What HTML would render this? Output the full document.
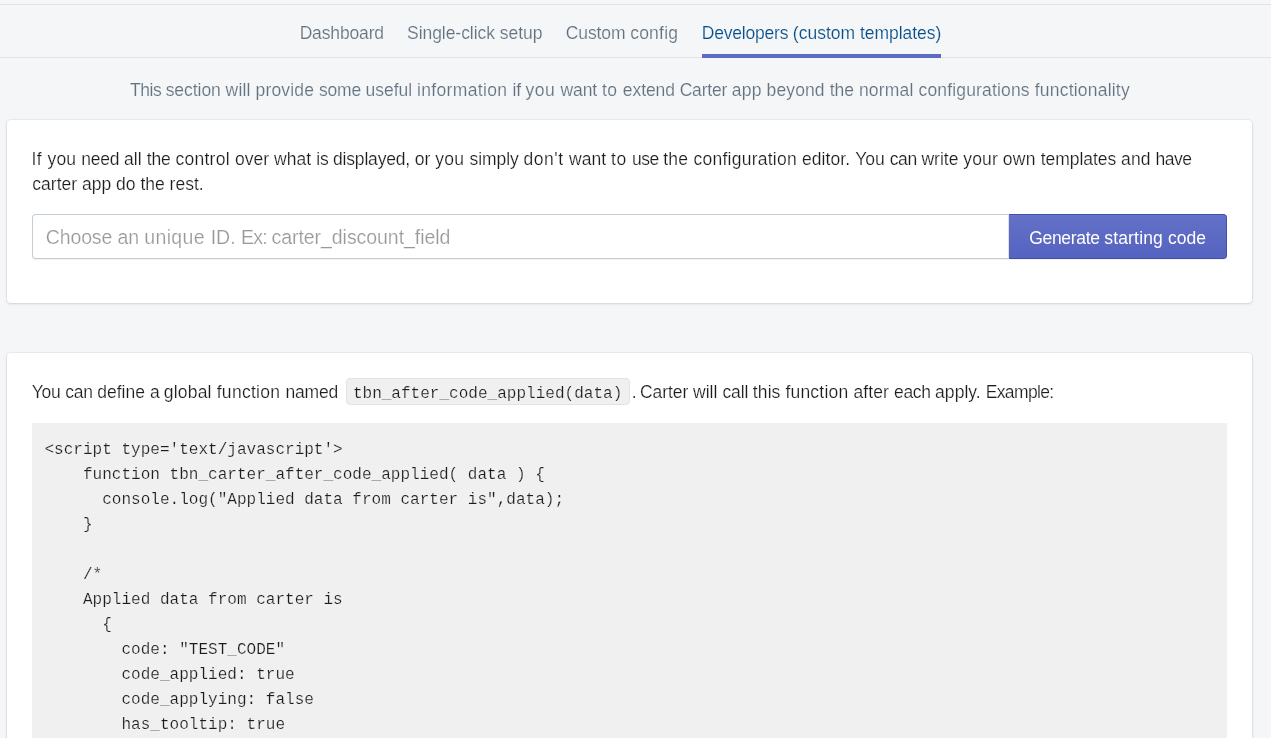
<!DOCTYPE html>
<html lang="en">
<head>
<meta charset="utf-8">
<title>Carter - Developers (custom templates)</title>
<style>
*{box-sizing:border-box;margin:0;padding:0}
html,body{width:1271px;height:738px;overflow:hidden;background:#f4f6f8}
body{position:relative;font-family:"Liberation Sans",Arial,sans-serif;font-size:17.5px;line-height:25px;color:#1c1c1c}
#wrap{position:absolute;left:0;top:0;width:1271px;height:738px;overflow:hidden;will-change:transform}
ul{list-style:none}
a{text-decoration:none}
.abs{position:absolute;white-space:nowrap}
.t{line-height:25px;height:25px;font-weight:400;font-style:normal}
.topline{left:0;top:4px;width:1271px;height:1px;background:#dfe3e8}
.tabline{left:0;top:57px;width:1271px;height:1px;background:#dfe3e8}
.tabul{left:702px;top:54px;width:239px;height:4px;background:#5c6ac4}
.card{left:7px;width:1245px;background:#fff;border-radius:4px;box-shadow:0 0 0 1px rgba(63,63,68,.05),0 1px 3px 0 rgba(63,63,68,.15)}
.c1{top:120px;height:183px}
.c2{top:353px;height:400px}
.input{width:977px;height:45px;background:#fff;border:1px solid #c4cdd5;border-right-color:#dde1e6;border-radius:4px 0 0 4px;box-shadow:0 1px 0 0 rgba(22,29,37,.05)}
.btn{width:218px;height:45px;border-radius:0 3.75px 3.75px 0;background:linear-gradient(to bottom,#6371c7,#5563c1);border:1px solid #3f4eae;border-left-width:0;box-shadow:inset 0 1px 0 0 #6774c8,0 1px 0 0 rgba(22,29,37,.05);font:inherit;color:#fff;text-align:left;cursor:pointer;overflow:visible}
.icode{width:284px;height:27px;background:#f0f0f0;border:1px solid #e2e2e2;border-radius:4px}
.mono{font-family:"Liberation Mono","DejaVu Sans Mono",monospace}
pre#code{width:1195px;height:330px;background:#f0f0f0;padding:15px 12.5px;font-family:"Liberation Mono","DejaVu Sans Mono",monospace;font-size:16.04px;line-height:25px;color:#1c1c1c;white-space:pre;overflow:hidden;-webkit-text-stroke:0.2px #f0f0f0}
</style>
</head>
<body>
<div id="wrap">
<div class="abs topline"></div>
<div class="abs tabline"></div>
<nav class="tabs">
<ul>
<li><a id="t1" class="abs t" style="left:299.63px;top:21px;font-size:17.5px;color:#637381;letter-spacing:-0.142px;-webkit-text-stroke:0.15px #f4f6f8">Dashboard</a></li>
<li><a id="t2" class="abs t" style="left:407.04px;top:21px;font-size:17.5px;color:#637381;letter-spacing:-0.023px;-webkit-text-stroke:0.15px #f4f6f8"><span style="letter-spacing:-0.054px">Single-click </span><span style="letter-spacing:0.002px">setup</span></a></li>
<li><a id="t3" class="abs t" style="left:565.75px;top:21px;font-size:17.5px;color:#637381;letter-spacing:0.047px;-webkit-text-stroke:0.15px #f4f6f8"><span style="letter-spacing:-0.103px">Custom </span><span style="letter-spacing:0.227px">config</span></a></li>
<li><a id="t4" class="abs t" aria-current="page" style="left:701.74px;top:21px;font-size:17.5px;color:#084e8a;letter-spacing:-0.069px;-webkit-text-stroke:0.15px #f4f6f8"><span style="letter-spacing:-0.205px">Developers </span><span style="letter-spacing:-0.007px">(custom </span><span style="letter-spacing:-0.036px">templates)</span></a></li>
</ul>
<div class="abs tabul"></div>
</nav>
<p id="sub" class="abs t" style="left:130.1px;top:78px;font-size:17.5px;color:#637381;letter-spacing:0.079px;-webkit-text-stroke:0.15px #f4f6f8"><span style="letter-spacing:-0.481px">This </span><span style="letter-spacing:-0.046px">section </span><span style="letter-spacing:0.159px">will </span><span style="letter-spacing:0.154px">provide </span><span style="letter-spacing:-0.221px">some </span><span style="letter-spacing:-0.035px">useful </span><span style="letter-spacing:0.346px">information </span><span style="letter-spacing:-0.221px">if </span><span style="letter-spacing:0.454px">you </span><span style="letter-spacing:-0.041px">want </span><span style="letter-spacing:0.446px">to </span><span style="letter-spacing:-0.078px">extend </span><span style="letter-spacing:-0.192px">Carter </span><span style="letter-spacing:0.179px">app </span><span style="letter-spacing:0.108px">beyond </span><span style="letter-spacing:0.029px">the </span><span style="letter-spacing:0.165px">normal </span><span style="letter-spacing:0.166px">configurations </span><span style="letter-spacing:0.204px">functionality</span></p>
<section class="abs card c1">
<p id="p1" class="abs t" style="left:24.58px;top:27px;font-size:17.5px;color:#1c1c1c;letter-spacing:0.063px;-webkit-text-stroke:0.2px #ffffff"><span style="letter-spacing:0.43px">If </span><span style="letter-spacing:0.163px">you </span><span style="letter-spacing:-0.197px">need </span>all <span style="letter-spacing:-0.087px">the </span><span style="letter-spacing:0.251px">control </span><span style="letter-spacing:0.043px">over </span><span style="letter-spacing:0.083px">what </span><span style="letter-spacing:-0.237px">is </span><span style="letter-spacing:-0.192px">displayed, </span>or <span style="letter-spacing:0.288px">you </span><span style="letter-spacing:-0.066px">simply </span><span style="letter-spacing:0.53px">don't </span>want <span style="letter-spacing:0.496px">to </span><span style="letter-spacing:-0.487px">use </span><span style="letter-spacing:0.288px">the </span><span style="letter-spacing:0.242px">configuration </span><span style="letter-spacing:0.076px">editor. </span><span style="letter-spacing:0.038px">You </span><span style="letter-spacing:-0.337px">can </span><span style="letter-spacing:-0.004px">write </span><span style="letter-spacing:0.143px">your </span><span style="letter-spacing:0.238px">own </span><span style="letter-spacing:-0.047px">templates </span><span style="letter-spacing:0.113px">and </span><span style="letter-spacing:-0.537px">have</span></p>
<p id="p2" class="abs t" style="left:25.37px;top:52px;font-size:17.5px;color:#1c1c1c;letter-spacing:0.004px;-webkit-text-stroke:0.2px #ffffff">carter app do the rest.</p>
<div class="abs input" style="left:25px;top:94px">
<span id="ph" class="abs t" style="left:12.86px;top:10px;font-size:19.5px;color:#999999;letter-spacing:-0.069px;-webkit-text-stroke:0.2px #ffffff"><span style="letter-spacing:-0.155px">Choose </span>an <span style="letter-spacing:0.345px">unique </span><span style="letter-spacing:-0.019px">ID. </span><span style="letter-spacing:-0.769px">Ex: </span><span style="letter-spacing:-0.054px">carter_discount_field</span></span>
</div>
<button type="button" class="abs btn" style="left:1002px;top:94px">
<span id="bt" class="abs t" style="left:20.2px;top:11px;font-size:17.5px;color:#ffffff;letter-spacing:-0.041px"><span style="letter-spacing:-0.308px">Generate </span><span style="letter-spacing:0.17px">starting </span><span style="letter-spacing:0.026px">code</span></span>
</button>
</section>
<section class="abs card c2">
<span id="q1" class="abs t" style="left:24.73px;top:27px;font-size:17.5px;color:#1c1c1c;letter-spacing:0.003px;-webkit-text-stroke:0.2px #ffffff"><span style="letter-spacing:-0.222px">You </span><span style="letter-spacing:-0.272px">can </span><span style="letter-spacing:0.017px">define </span><span style="letter-spacing:-0.347px">a </span><span style="letter-spacing:0.189px">global </span><span style="letter-spacing:0.281px">function </span><span style="letter-spacing:-0.147px">named</span></span>
<span class="abs icode" style="left:339px;top:25px"></span>
<code id="ic" class="abs t mono" style="left:345.9px;top:29px;font-size:16.04px;color:#1c1c1c;-webkit-text-stroke:0.2px #f0f0f0">tbn_after_code_applied(data)</code>
<span id="q2" class="abs t" style="left:624.84px;top:27px;font-size:17.5px;color:#1c1c1c;letter-spacing:-0.084px;-webkit-text-stroke:0.2px #ffffff"><span style="letter-spacing:-0.784px">. </span><span style="letter-spacing:-0.07px">Carter </span><span style="letter-spacing:0.056px">will </span><span style="letter-spacing:-0.144px">call </span><span style="letter-spacing:0.096px">this </span><span style="letter-spacing:0.205px">function </span><span style="letter-spacing:0.116px">after </span><span style="letter-spacing:-0.344px">each </span><span style="letter-spacing:0.045px">apply. </span><span style="letter-spacing:-0.627px">Example:</span></span>
<pre class="abs" id="code" style="left:25px;top:70px">&lt;script type='text/javascript'&gt;
    function tbn_carter_after_code_applied( data ) {
      console.log("Applied data from carter is",data);
    }

    /*
    Applied data from carter is
      {
        code: "TEST_CODE"
        code_applied: true
        code_applying: false
        has_tooltip: true
        tooltip_text: "Sample tooltip"
        discount_amount: 10
        discount_type: "percentage"
      }
    */
&lt;/script&gt;</pre>
</section>
</div>
</body>
</html>
